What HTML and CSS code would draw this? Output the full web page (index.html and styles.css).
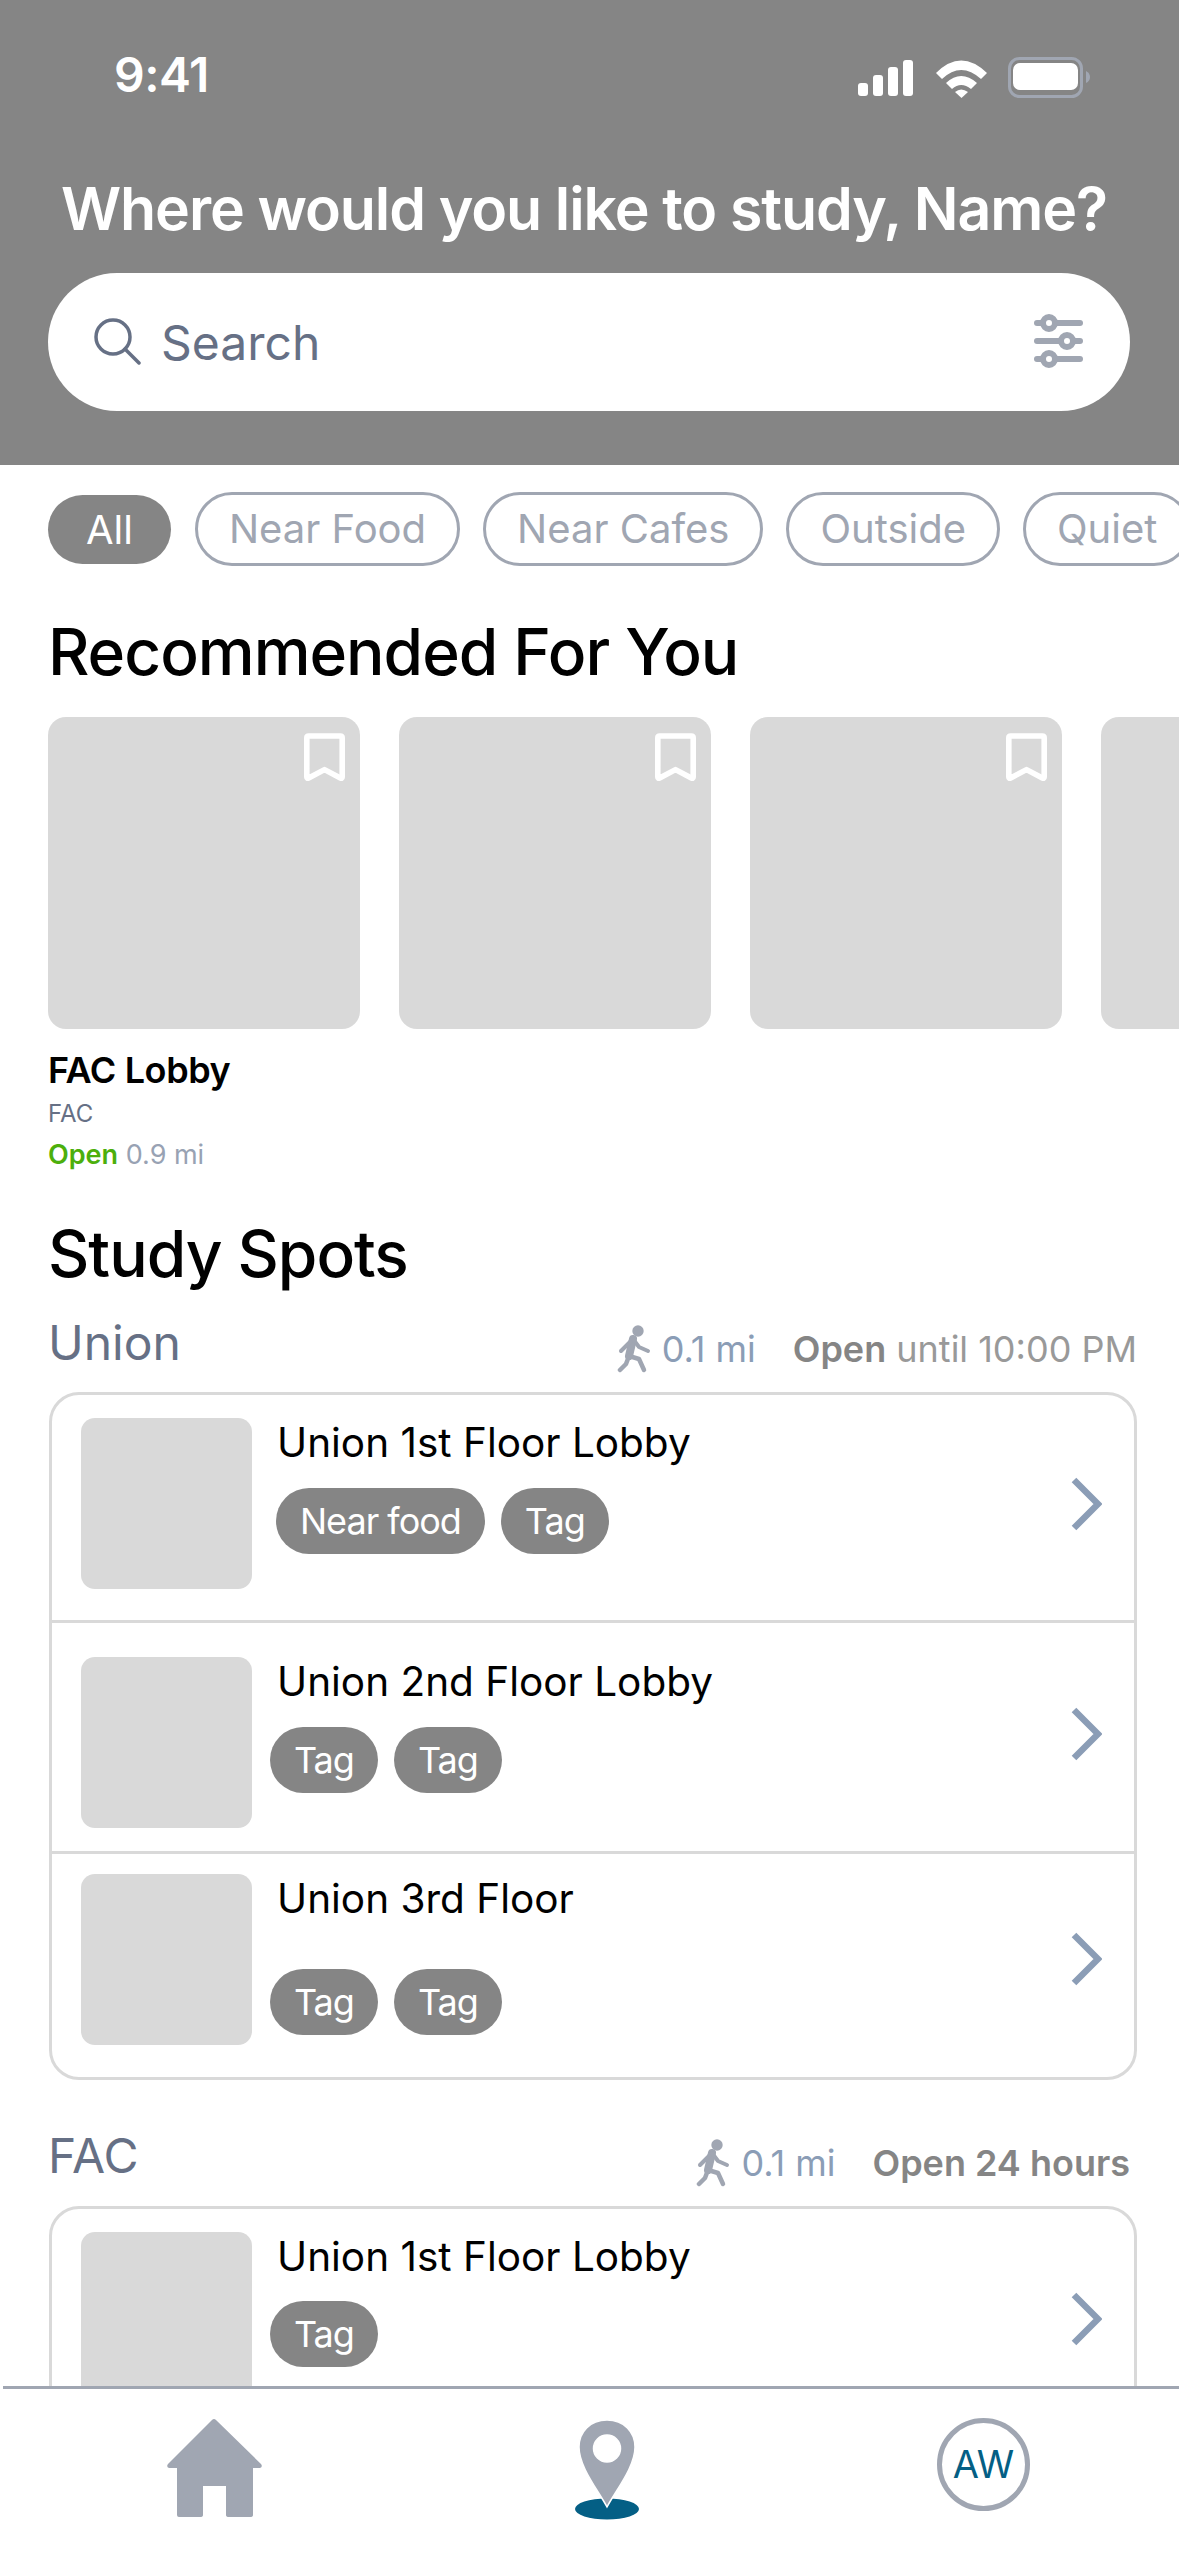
FILE: index.html
```html
<!DOCTYPE html>
<html lang="en">
<head>
<meta charset="utf-8">
<title>Study Spots</title>
<link rel="stylesheet" href="styles.css">
</head>
<body>
<div class="app">
  <div class="scroller">
    <header class="hero">
      <div class="status">
        <span class="time">9:41</span>
        <svg class="status-icons" viewBox="0 0 236 44" width="236" height="44">
          <g fill="#fff">
            <rect x="2" y="27" width="10" height="13" rx="3"/>
            <rect x="17" y="19" width="10" height="21" rx="3"/>
            <rect x="32" y="11" width="10" height="29" rx="3"/>
            <rect x="47" y="4" width="10" height="36" rx="3"/>
            <path d="M80 17 Q105 -8 131 17 L125 23 Q105 5 86 23Z"/>
            <path d="M90 27 Q105 13 121 27 L115 33 Q105 25 96 33Z"/>
            <path d="M99 36 Q105 31 112 36 L105.500 42Z"/>
            <rect x="157" y="7" width="65" height="27" rx="7"/>
          </g>
          <rect x="153.500" y="2.500" width="72" height="38" rx="10" fill="none" stroke="#a0a6b2" stroke-width="3"/>
          <path d="M230 15 Q234 17 234 21 Q234 25 230 27Z" fill="#a0a6b2"/>
        </svg>
      </div>
      <h1 class="hero-title">Where would you like to study, Name?</h1>
      <div class="search">
        <svg class="search-icon" viewBox="0 0 50 50" width="50" height="50">
          <circle cx="22" cy="22" r="17" fill="none" stroke="#667085" stroke-width="3.500"/>
          <path d="M34 34 L48 48" stroke="#667085" stroke-width="3.500" stroke-linecap="round"/>
        </svg>
        <span class="search-text">Search</span>
        <svg class="filter-icon" viewBox="0 0 50 56" width="50" height="56">
          <g stroke="#a0a6b2" stroke-width="6" stroke-linecap="round">
            <path d="M3 10 H46"/><path d="M3 28 H46"/><path d="M3 46 H46"/>
          </g>
          <g fill="#fff" stroke="#a0a6b2" stroke-width="6">
            <circle cx="15" cy="10" r="6"/><circle cx="33" cy="28" r="6"/><circle cx="15" cy="46" r="6"/>
          </g>
        </svg>
      </div>
    </header>

    <div class="chips">
      <span class="chip chip-active">All</span>
      <span class="chip">Near Food</span>
      <span class="chip">Near Cafes</span>
      <span class="chip">Outside</span>
      <span class="chip">Quiet</span>
    </div>

    <h2 class="section-title section-rec">Recommended For You</h2>
    <div class="carousel">
      <div class="rec-card">
        <div class="rec-image">
          <svg class="bookmark" viewBox="0 0 44 52" width="41" height="51"><path d="M5 3 H39 Q41 3 41 5 V47 Q41 49 39 48 L22 39 L5 48 Q3 49 3 47 V5 Q3 3 5 3Z" fill="none" stroke="#fff" stroke-width="6" stroke-linejoin="round"/></svg>
        </div>
        <div class="rec-name">FAC Lobby</div>
        <div class="rec-place">FAC</div>
        <div class="rec-meta"><b class="open-green">Open</b> 0.9 mi</div>
      </div>
      <div class="rec-card">
        <div class="rec-image">
          <svg class="bookmark" viewBox="0 0 44 52" width="41" height="51"><path d="M5 3 H39 Q41 3 41 5 V47 Q41 49 39 48 L22 39 L5 48 Q3 49 3 47 V5 Q3 3 5 3Z" fill="none" stroke="#fff" stroke-width="6" stroke-linejoin="round"/></svg>
        </div>
      </div>
      <div class="rec-card">
        <div class="rec-image">
          <svg class="bookmark" viewBox="0 0 44 52" width="41" height="51"><path d="M5 3 H39 Q41 3 41 5 V47 Q41 49 39 48 L22 39 L5 48 Q3 49 3 47 V5 Q3 3 5 3Z" fill="none" stroke="#fff" stroke-width="6" stroke-linejoin="round"/></svg>
        </div>
      </div>
      <div class="rec-card">
        <div class="rec-image"></div>
      </div>
    </div>

    <h2 class="section-title section-spots">Study Spots</h2>

    <div class="group-head">
      <span class="group-name">Union</span>
      <span class="group-meta">
        <svg class="walker" viewBox="0 0 34 48" width="34" height="48">
          <circle cx="21" cy="6" r="5.700" fill="#a0a6b2"/>
          <g fill="none" stroke="#a0a6b2" stroke-linecap="round" stroke-linejoin="round">
            <path d="M16 14 L12 31" stroke-width="8"/>
            <path d="M16 14 L4 26" stroke-width="4"/>
            <path d="M16 14 L22 22 L31 26" stroke-width="4"/>
            <path d="M12 31 L22 34 L27 45" stroke-width="4.500"/>
            <path d="M12 31 L9 39 L3 45" stroke-width="4.500"/>
          </g>
        </svg>
        <span class="dist">0.1 mi</span>
        <span class="hours"><b>Open</b> until 10:00 PM</span>
      </span>
    </div>
    <div class="list">
      <div class="row row-one">
        <div class="thumb"></div>
        <div class="row-body">
          <div class="row-name">Union 1st Floor Lobby</div>
          <div class="tags tags-one"><span class="tag">Near food</span><span class="tag">Tag</span></div>
        </div>
        <svg class="chevron" viewBox="0 0 32 54" width="32" height="54"><path d="M4 3 L28 27 L4 51" fill="none" stroke="#8b9db6" stroke-width="6.500"/></svg>
      </div>
      <div class="row row-two">
        <div class="thumb"></div>
        <div class="row-body">
          <div class="row-name">Union 2nd Floor Lobby</div>
          <div class="tags tags-two"><span class="tag">Tag</span><span class="tag">Tag</span></div>
        </div>
        <svg class="chevron" viewBox="0 0 32 54" width="32" height="54"><path d="M4 3 L28 27 L4 51" fill="none" stroke="#8b9db6" stroke-width="6.500"/></svg>
      </div>
      <div class="row row-three">
        <div class="thumb"></div>
        <div class="row-body">
          <div class="row-name">Union 3rd Floor</div>
          <div class="tags tags-three"><span class="tag">Tag</span><span class="tag">Tag</span></div>
        </div>
        <svg class="chevron" viewBox="0 0 32 54" width="32" height="54"><path d="M4 3 L28 27 L4 51" fill="none" stroke="#8b9db6" stroke-width="6.500"/></svg>
      </div>
    </div>

    <div class="group-head group-fac">
      <span class="group-name">FAC</span>
      <span class="group-meta">
        <svg class="walker" viewBox="0 0 34 48" width="34" height="48">
          <circle cx="21" cy="6" r="5.700" fill="#a0a6b2"/>
          <g fill="none" stroke="#a0a6b2" stroke-linecap="round" stroke-linejoin="round">
            <path d="M16 14 L12 31" stroke-width="8"/>
            <path d="M16 14 L4 26" stroke-width="4"/>
            <path d="M16 14 L22 22 L31 26" stroke-width="4"/>
            <path d="M12 31 L22 34 L27 45" stroke-width="4.500"/>
            <path d="M12 31 L9 39 L3 45" stroke-width="4.500"/>
          </g>
        </svg>
        <span class="dist">0.1 mi</span>
        <span class="hours hours-bold">Open 24 hours</span>
      </span>
    </div>
    <div class="list list-fac">
      <div class="row row-fac">
        <div class="thumb"></div>
        <div class="row-body">
          <div class="row-name">Union 1st Floor Lobby</div>
          <div class="tags tags-fac"><span class="tag">Tag</span></div>
        </div>
        <svg class="chevron" viewBox="0 0 32 54" width="32" height="54"><path d="M4 3 L28 27 L4 51" fill="none" stroke="#8b9db6" stroke-width="6.500"/></svg>
      </div>
    </div>
  </div>

  <nav class="nav">
    <svg class="nav-home" viewBox="0 0 97 100" width="97" height="100"><path d="M46 2 Q48 0 50 2 L95 46 Q97 49 94 50 H87 V97 Q87 99 84 99 H63 Q60 99 60 97 V68 H37 V97 Q37 99 34 99 H13 Q11 99 11 97 V50 H3 Q0 49 2 46Z" fill="#a0a6b2"/></svg>
    <svg class="nav-pin" viewBox="0 0 66 102" width="66" height="102">
      <ellipse cx="33" cy="91" rx="32" ry="10.500" fill="#045f85"/>
      <path fill-rule="evenodd" d="M33 2 C50 2 61 14 61 29 C61 49 42 72 33 89 C24 72 5 49 5 29 C5 14 16 2 33 2Z M33 17 A13.500 13.500 0 1 0 33.010 44 A13.500 13.500 0 1 0 33 17Z" fill="#a0a6b2" stroke="#fff" stroke-width="1.500"/>
    </svg>
    <div class="avatar">AW</div>
  </nav>
</div>
</body>
</html>
```
FILE: styles.css
```css
* { box-sizing: border-box; }
html, body { margin: 0; padding: 0; background: #fff; }
body { font-family: Inter, "Noto Sans", sans-serif; color: #000; }

.app { width: 1179px; height: 2556px; display: flex; flex-direction: column; overflow: hidden; background: #fff; }
.scroller { flex: 1; min-height: 0; overflow: hidden; }

.hero { height: 465px; background: #858585; padding: 0 49px 0 48px; display: flex; flex-direction: column; }
.status { height: 98px; margin-top: 52px; padding: 0 0 0 66px; display: flex; justify-content: space-between; align-items: flex-start; color: #fff; }
.time { font-size: 48px; font-weight: 600; line-height: 46px; letter-spacing: -0.5px; }
.status-icons { margin: 4px 38px 0 0; }
.hero-title { margin: 33px 0 0 13px; font-size: 59px; font-weight: 600; line-height: 52px; letter-spacing: -1.1px; color: #fff; white-space: nowrap; }
.search { height: 138px; margin-top: 38px; border-radius: 69px; background: #fff; display: flex; align-items: center; padding: 0 46px 0 43px; }
.search-icon { margin-top: -4px; }
.search-text { margin-left: 20px; flex: 1; font-size: 48px; color: #667085; }
.filter-icon { margin-top: -2px; }

.chips { display: flex; align-items: center; gap: 23px; padding: 27px 0 0 48px; overflow: hidden; }
.chip { flex: none; height: 74px; padding: 0 31px; border: 3px solid #a0a6b2; border-radius: 37px; font-size: 40px; line-height: 68px; color: #a0a6b2; }
.chip-active { height: 69px; padding: 0 38px; margin-right: 1px; border: 0; line-height: 69px; background: #858585; color: #fff; }

.section-title { margin: 0 0 0 48px; font-size: 64px; font-weight: 500; line-height: 76px; letter-spacing: -1px; color: #000; }
.section-rec { margin-top: 48px; }
.section-spots { margin-top: 45px; }

.carousel { display: flex; gap: 39px; padding: 27px 0 0 48px; overflow: hidden; }
.rec-card { flex: none; width: 312px; }
.rec-image { position: relative; height: 312px; border-radius: 18px; background: #d9d9d9; }
.bookmark { position: absolute; top: 15px; right: 15px; }
.rec-name { margin-top: 19px; font-size: 36px; font-weight: 600; line-height: 44px; letter-spacing: -0.4px; }
.rec-place { margin-top: 8px; font-size: 24px; line-height: 28px; color: #667085; }
.rec-meta { margin-top: 11px; font-size: 27px; line-height: 32px; color: #98a2b3; }
.open-green { font-weight: 600; color: #4caf0c; }

.group-head { display: flex; justify-content: space-between; align-items: flex-start; margin: 23px 42px 0 48px; height: 77px; }
.group-name { font-size: 48px; line-height: 56px; color: #667085; }
.group-meta { display: flex; align-items: center; margin-top: 10px; font-size: 36px; }
.walker { margin-right: 11px; margin-left: -3px; }
.dist { color: #8b9db6; }
.hours { margin-left: 37px; color: #999; }
.hours b { font-weight: 600; color: #858585; }
.hours-bold { font-weight: 600; color: #858585; }

.list { margin: 0 42px 0 49px; border: 3px solid #d9d9d9; border-radius: 30px; }
.row { display: flex; align-items: flex-start; padding-left: 29px; }
.row + .row { border-top: 3px solid #d9d9d9; }
.row-one { height: 225px; padding-top: 23px; }
.row-two { height: 231px; padding-top: 34px; }
.row-three { height: 226px; padding-top: 20px; }
.thumb { flex: none; width: 171px; height: 171px; border-radius: 14px; background: #d9d9d9; }
.row-body { flex: 1; min-width: 0; padding-left: 25px; }
.row-name { font-size: 40.500px; font-weight: 400; line-height: 50px; color: #000; white-space: nowrap; }
.tags { display: flex; gap: 16px; }
.tags-one { margin-top: 20px; margin-left: -1px; }
.tags-two { margin-top: 20px; margin-left: -7px; }
.tags-three { margin-top: 45px; margin-left: -7px; }
.tags-fac { margin-top: 19px; margin-left: -7px; }
.tag { flex: none; height: 66px; padding: 0 24px; border-radius: 33px; background: #858585; color: #fff; font-size: 36px; line-height: 66px; letter-spacing: -1px; }
.chevron { flex: none; margin: 59px 32px 0 0; }
.row-two .chevron { margin-top: 50px; }
.row-three .chevron { margin-top: 58px; }
.row-fac .chevron { margin-top: 60px; }

.group-fac { margin-top: 48px; height: 78px; }
.group-fac .group-meta { margin-top: 11px; margin-right: 7px; }
.list-fac { height: 240px; }
.row-fac { padding-top: 23px; }

.nav { flex: none; height: 170px; margin-left: 3px; border-top: 3px solid #a0a6b2; background: #fff; display: flex; align-items: flex-start; padding: 29px 0 0 163px; }
.nav-pin { margin-left: 311px; }
.avatar { width: 93px; height: 93px; margin-left: 297px; border: 5px solid #a0a6b2; border-radius: 50%; color: #045f85; font-size: 38px; line-height: 83px; text-align: center; }
```
